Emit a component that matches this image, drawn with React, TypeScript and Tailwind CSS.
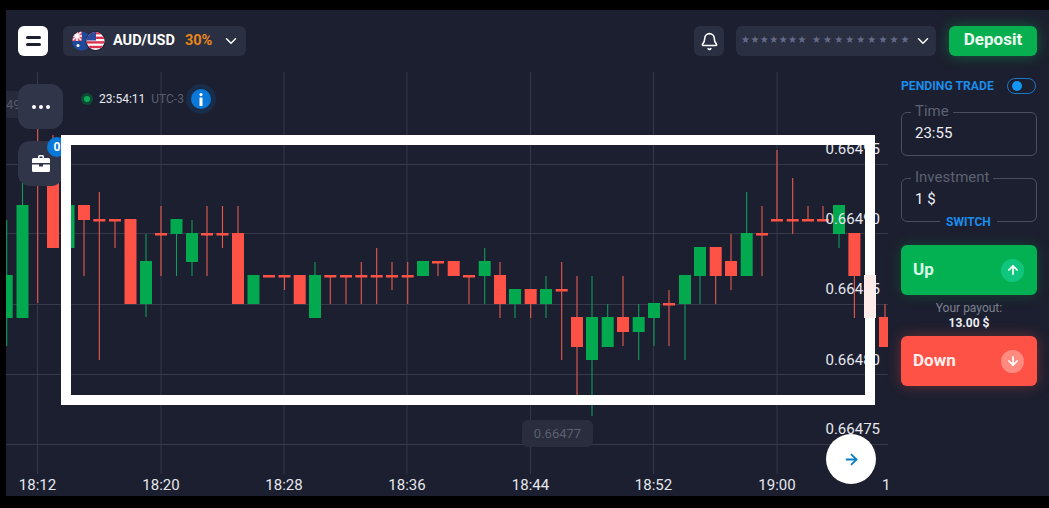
import React from 'react';
import { Bell, ChevronDown, ArrowRight, ArrowUp, ArrowDown } from 'lucide-react';

// [center x, up?, body top, body bottom, wick top, wick bottom], page pixels
type Candle = [number, boolean, number, number, number, number];

const candles: Candle[] = [
  [6.7, true, 275, 318, 220, 346],
  [22.5, true, 205, 318, 183, 318],
  [37.7, false, 120, 122, 100, 303],
  [53, false, 175, 248, 135, 248],
  [68.5, true, 205, 248, 205, 248],
  [84, false, 205, 220, 205, 276],
  [99.3, false, 219, 221.5, 192, 360],
  [115, false, 219, 221.5, 219, 248],
  [130.5, false, 219, 304, 219, 304],
  [146, true, 261, 304, 234, 317],
  [161, false, 233, 235.5, 206, 276],
  [176.5, true, 219, 234, 219, 276],
  [192, true, 233, 262, 220, 276],
  [207, false, 233, 235.5, 206, 276],
  [222.5, false, 233, 235.5, 206, 248],
  [238, false, 233, 304, 206, 304],
  [253.5, true, 275, 304, 275, 304],
  [269, false, 275, 277.5, 275, 277],
  [284.5, false, 275, 277.5, 275, 290],
  [299.7, false, 275, 304, 275, 304],
  [315, true, 275, 318, 262, 318],
  [330.3, false, 275, 277.5, 275, 304],
  [346, false, 275, 277.5, 275, 304],
  [361.3, false, 275, 277.5, 262, 304],
  [376.7, false, 275, 277.5, 248, 304],
  [392, false, 275, 277.5, 262, 290],
  [407.7, false, 275, 277.5, 262, 304],
  [423, true, 261, 276, 261, 276],
  [438, false, 261, 263.5, 261, 276],
  [453.7, false, 261, 276, 261, 276],
  [469, false, 275, 277.5, 275, 304],
  [484.7, true, 261, 276, 248, 304],
  [500, false, 275, 304, 262, 318],
  [515, true, 289, 304, 289, 318],
  [530.7, false, 289, 304, 289, 318],
  [546, true, 289, 304, 276, 318],
  [561.7, false, 289, 291.5, 262, 360],
  [577, false, 317, 347, 276, 396],
  [592, true, 317, 360, 276, 416],
  [607.7, true, 317, 347, 304, 347],
  [623, false, 317, 332, 276, 346],
  [638.7, true, 317, 332, 304, 360],
  [654, true, 303, 318, 303, 346],
  [669, false, 303, 305.5, 290, 346],
  [685, true, 275, 304, 275, 360],
  [700, true, 247, 276, 247, 304],
  [715.7, false, 247, 276, 247, 304],
  [731, false, 261, 276, 234, 290],
  [746.7, true, 233, 276, 192, 276],
  [762, false, 233, 235.5, 206, 276],
  [777, false, 219, 221.5, 150, 220],
  [792.7, false, 219, 221.5, 178, 234],
  [808, false, 219, 221.5, 206, 220],
  [823, false, 219, 221.5, 206, 220],
  [839, true, 205, 234, 205, 248],
  [854.4, false, 233, 276, 233, 318],
  [885, false, 317, 347, 304, 347],
];

const gridX = [37.5, 161, 284, 407, 530.5, 653.5, 777];
const gridY = [164, 233, 304, 374, 444];
const times = ['18:12', '18:20', '18:28', '18:36', '18:44', '18:52', '19:00'];

const prices = [
  { label: '0.66495', top: 67 },
  { label: '0.66490', top: 137 },
  { label: '0.66485', top: 207 },
  { label: '0.66480', top: 278 },
  { label: '0.66475', top: 347 },
];

const Chart: React.FC = () => (
  <svg className="absolute inset-0" width={882} height={424} viewBox="6 72 882 424">
    {gridX.map(x => (
      <line key={x} x1={x} x2={x} y1={72} y2={474} stroke="#353949" strokeWidth={1} />
    ))}
    {gridY.map(y => (
      <line key={y} x1={6} x2={888} y1={y + 0.5} y2={y + 0.5} stroke="#353949" strokeWidth={1} />
    ))}
    {candles.map(([x, up, top, bottom, wickTop, wickBottom]) => (
      <g key={x}>
        <line x1={x} x2={x} y1={wickTop} y2={wickBottom} stroke={up ? '#0f9c5c' : '#e85a50'} strokeWidth={1.1} />
        <rect x={x - 6} y={top} width={12} height={bottom - top} fill={up ? '#02a94f' : '#ff5246'} />
      </g>
    ))}
  </svg>
);

const Flags: React.FC = () => (
  <svg width={33} height={20} viewBox="0 0 33 20" className="shrink-0">
    <clipPath id="au">
      <circle cx={9.5} cy={10} r={9.5} />
    </clipPath>
    <g clipPath="url(#au)">
      <rect x={0} y={0} width={20} height={20} fill="#1f4a9c" />
      <rect x={0} y={0} width={10} height={10} fill="#d6506e" />
      <path d="M1 1 L9 9 M9 1 L1 9" stroke="#fff" strokeWidth={1.3} />
      <path d="M5 0 V10 M0 5 H10" stroke="#fff" strokeWidth={1.6} />
      <circle cx={6} cy={14.5} r={1.5} fill="#fff" />
    </g>
    <circle cx={23.5} cy={10} r={10} fill="#1f2435" />
    <clipPath id="us">
      <circle cx={23.5} cy={10} r={9} />
    </clipPath>
    <g clipPath="url(#us)">
      <rect x={14} y={1} width={19} height={18} fill="#fff" />
      <rect x={14} y={1} width={19} height={2.4} fill="#d9344f" />
      <rect x={14} y={5.6} width={19} height={2.4} fill="#d9344f" />
      <rect x={14} y={10.2} width={19} height={2.4} fill="#d9344f" />
      <rect x={14} y={14.8} width={19} height={2.4} fill="#d9344f" />
      <rect x={14} y={1} width={10} height={8.5} fill="#2f4a9e" />
    </g>
  </svg>
);

const Field: React.FC<{ label: string; value: string }> = ({ label, value }) => (
  <fieldset className="h-[53px] rounded-md border border-[#4a4e5f] pl-[7px]">
    <legend className="ml-[2px] px-[4px] text-[15px] leading-[18px] text-[#5d6172]">
      <span className="relative top-[-1px]">{label}</span>
    </legend>
    <div className="mt-[2px] pl-[6px] text-[15px] leading-[20px] text-[#eef0f4]">{value}</div>
  </fieldset>
);

const App: React.FC = () => (
  <div className="flex h-[508px] w-[1049px] overflow-hidden bg-black pb-[12px] pl-[6px] pt-[10px] [font-family:Roboto,sans-serif]">
    <div className="flex flex-1 flex-col bg-[#1c1f2f]">
      <header className="flex h-[62px] shrink-0 items-start pl-[12px] pr-[12px] pt-[16px]">
        <button className="flex h-[30px] w-[30px] flex-col items-center justify-center gap-[4.5px] rounded-md bg-white">
          <span className="h-[3px] w-[15px] rounded-sm bg-[#1c1f2f]" />
          <span className="h-[3px] w-[15px] rounded-sm bg-[#1c1f2f]" />
        </button>
        <div className="ml-[15px] flex h-[30px] w-[183px] items-center rounded-md bg-[#2a2f41] pl-[9px] text-[14.5px] font-bold text-white">
          <Flags />
          <span className="ml-[8px]">AUD/USD</span>
          <span className="ml-[10px] text-[#e8861c]">30%</span>
          <ChevronDown size={18} strokeWidth={2} className="ml-auto mr-[6px]" />
        </div>
        <button className="ml-auto flex h-[30px] w-[30px] items-center justify-center rounded-md bg-[#2a2f41] text-white">
          <Bell size={19} strokeWidth={2} />
        </button>
        <div className="ml-[12px] flex h-[30px] w-[200px] items-center rounded-md bg-[#2a2f41] pl-[5px] text-[#666c88]">
          <span className="mt-[-4px] w-[71px] whitespace-pre text-[10px] tracking-[0.45px] [font-family:'DejaVu_Sans',sans-serif]">★★★★★★★</span>
          <span className="mt-[-4px] whitespace-pre text-[10px] tracking-[2.1px] [font-family:'DejaVu_Sans',sans-serif]">★★★★★★★★★</span>
          <ChevronDown size={18} strokeWidth={2} className="ml-auto mr-[4px] text-white" />
        </div>
        <button className="ml-[13px] h-[30px] w-[88px] rounded-md bg-[#08af50] pb-[2px] text-[17px] font-bold text-[#eefcf3] shadow-[0_0_14px_rgba(8,175,80,0.45)]">
          Deposit
        </button>
      </header>

      <div className="flex flex-1">
        <div className="relative h-[424px] w-[882px] shrink-0">
          <Chart />

          <div className="absolute left-0 top-[19px] flex h-[27px] w-[24px] items-center rounded-r bg-[#262a3a] text-[13px] text-[#565a6b]">49</div>

          <div className="absolute left-[75px] top-[17px] flex h-[20px] items-center">
            <span className="flex h-[12px] w-[12px] items-center justify-center rounded-full bg-[#0d4a35]">
              <span className="h-[6px] w-[6px] rounded-full bg-[#0cab55]" />
            </span>
            <span className="ml-[6px] text-[12px] text-[#e8eaf0]">23:54:11</span>
            <span className="ml-[6px] text-[12px] text-[#5a5e70]">UTC-3</span>
            <span className="ml-[7px] flex h-[20px] w-[20px] items-center justify-center rounded-full bg-[#0a78d8] shadow-[0_0_0_5px_rgba(10,120,216,0.16)]">
              <svg width={6} height={13} viewBox="0 0 6 13" fill="#fff">
                <circle cx={3} cy={1.6} r={1.6} />
                <rect x={1.5} y={4.5} width={3} height={8.5} rx={0.5} />
              </svg>
            </span>
          </div>

          <button className="absolute left-[12px] top-[12px] flex h-[45px] w-[45px] items-center justify-center gap-[3px] rounded-xl bg-[#30354a]">
            <span className="h-[4px] w-[4px] rounded-full bg-white" />
            <span className="h-[4px] w-[4px] rounded-full bg-white" />
            <span className="h-[4px] w-[4px] rounded-full bg-white" />
          </button>
          <button className="absolute left-[12px] top-[69px] flex h-[45px] w-[45px] items-center justify-center rounded-xl bg-[#30354a]">
            <svg width={18} height={17} viewBox="0 0 18 17" fill="#fff">
              <path d="M6 3 V1.5 A1.5 1.5 0 0 1 7.5 0 h3 A1.5 1.5 0 0 1 12 1.5 V3 h4.5 A1.5 1.5 0 0 1 18 4.5 V8 H0 V4.5 A1.5 1.5 0 0 1 1.5 3 z M7.5 1.5 V3 h3 V1.5 z" fillRule="evenodd" />
              <path d="M0 9.5 h7 v2 h4 v-2 h7 V15.5 A1.5 1.5 0 0 1 16.5 17 h-15 A1.5 1.5 0 0 1 0 15.5 z" />
            </svg>
          </button>
          <span className="absolute left-[41px] top-[65px] flex h-[20px] w-[20px] items-center justify-center rounded-full bg-[#0a78d8] text-[12px] font-bold text-white">0</span>

          {prices.map(p => (
            <span key={p.label} className="absolute right-[8px] text-[15px] leading-[20px] text-[#e6e8ee]" style={{ top: p.top }}>
              {p.label}
            </span>
          ))}

          {times.map((t, i) => (
            <span key={t} className="absolute top-[403px] w-[60px] text-center text-[15px] leading-[20px] text-[#e6e8ee]" style={{ left: gridX[i] - 36 }}>
              {t}
            </span>
          ))}
          <span className="absolute left-[876px] top-[403px] text-[15px] leading-[20px] text-[#e6e8ee]">1</span>

          <span className="absolute left-[516px] top-[348px] flex h-[27px] w-[71px] items-center justify-center rounded-md bg-[#2a2d3d] text-[13px] text-[#5b5f70]">0.66477</span>

          {/* white highlight someone drew on the screenshot */}
          <div className="absolute left-[55px] top-[63px] h-[270px] w-[814px] border-[10px] border-white" />
          <div className="absolute left-[858px] top-[203px] h-[43px] w-[12px] bg-[#feecea]" />

          <button className="absolute left-[820px] top-[362px] flex h-[50px] w-[50px] items-center justify-center rounded-full bg-white text-[#0b7fc4]">
            <ArrowRight size={17} strokeWidth={2.5} />
          </button>
        </div>

        <aside className="flex w-[155px] shrink-0 flex-col pl-[13px]">
          <div className="flex h-[22px] w-[136px] items-center justify-between pt-[6px]">
            <span className="text-[12.2px] font-bold text-[#1a8cea]">PENDING TRADE</span>
            <span className="mr-[1px] flex h-[16px] w-[29px] items-center rounded-full border border-[#1a78c8] pl-[4px]">
              <span className="h-[10px] w-[10px] rounded-full bg-[#1496f5]" />
            </span>
          </div>
          <div className="relative mt-[9px] flex w-[136px] flex-col gap-[13px]">
            <Field label="Time" value="23:55" />
            <Field label="Investment" value="1 $" />
            <span className="absolute bottom-[-6px] left-[39px] bg-[#1c1f2f] px-[6px] text-[12px] font-bold leading-[12px] text-[#1a8cea]">SWITCH</span>
          </div>
          <button className="mt-[23px] flex h-[50px] w-[136px] shrink-0 items-center justify-between rounded-md bg-[#03b152] pl-[12px] pr-[13px] text-[17px] font-bold text-[#d9fbe8] shadow-[0_0_14px_rgba(3,177,82,0.25)]">
            Up
            <span className="flex h-[23px] w-[23px] items-center justify-center rounded-full bg-[#10c67f] text-white">
              <ArrowUp size={14} strokeWidth={3} />
            </span>
          </button>
          <div className="flex h-[41px] w-[136px] flex-col items-center justify-center pt-[1px]">
            <span className="text-[12px] leading-[15px] text-[#7d8190]">Your payout:</span>
            <span className="text-[12px] font-bold leading-[15px] text-[#eef0f4]">13.00 $</span>
          </div>
          <button className="flex h-[50px] w-[136px] shrink-0 items-center justify-between rounded-md bg-[#ff5246] pl-[12px] pr-[13px] text-[17px] font-bold text-[#fff0ee] shadow-[0_0_14px_rgba(255,82,70,0.35)]">
            Down
            <span className="flex h-[23px] w-[23px] items-center justify-center rounded-full bg-[#ff8a80] text-white">
              <ArrowDown size={14} strokeWidth={3} />
            </span>
          </button>
        </aside>
      </div>
    </div>
  </div>
);

export default App;
